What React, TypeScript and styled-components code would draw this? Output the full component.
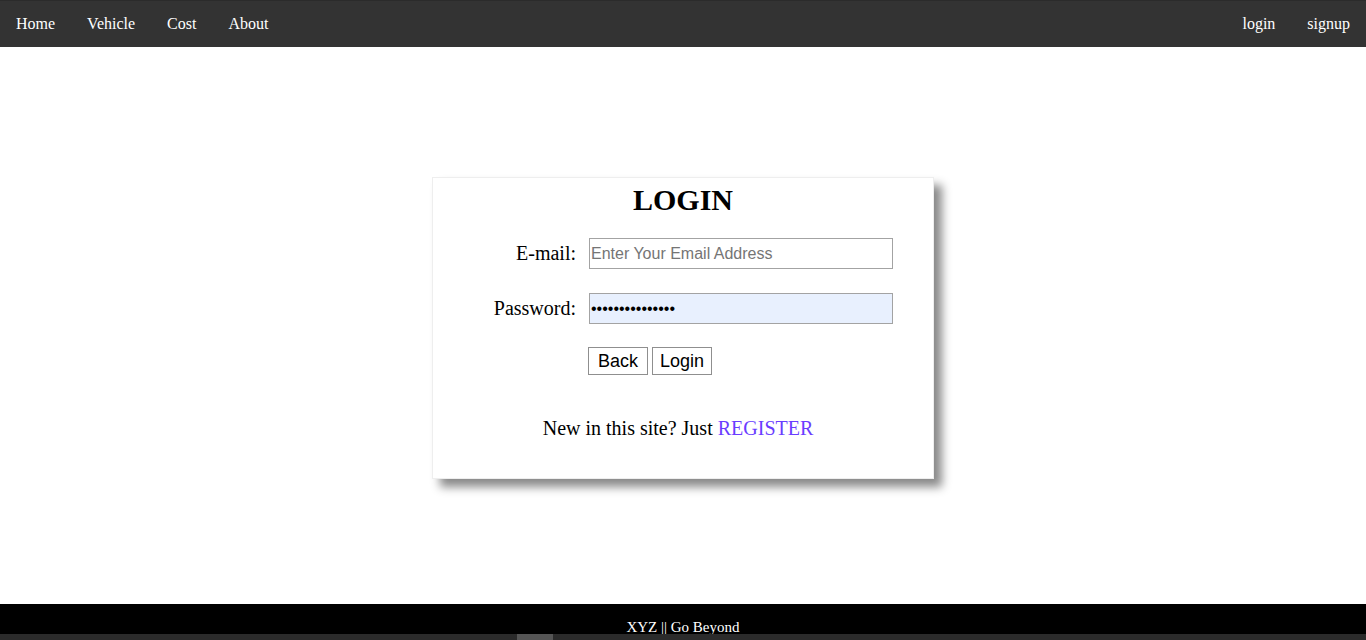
import React from 'react';
import styled, { createGlobalStyle } from 'styled-components';

const GlobalStyle = createGlobalStyle`
  html, body {
    margin: 0;
    padding: 0;
    overflow: hidden;
    background: #fff;
    font-family: "Liberation Serif", "Times New Roman", serif;
  }
`;

const leftLinks = ['Home', 'Vehicle', 'Cost', 'About'];
const rightLinks = ['login', 'signup'];

const App = () => {
  return (
    <>
      <GlobalStyle />
      <Page>
        <NavBar>
          <NavGroup>
            {leftLinks.map((l) => (
              <NavLink key={l} href="#">
                {l}
              </NavLink>
            ))}
          </NavGroup>
          <NavGroup>
            {rightLinks.map((l) => (
              <NavLink key={l} href="#">
                {l}
              </NavLink>
            ))}
          </NavGroup>
        </NavBar>

        <Main>
          <Card>
            <Title>LOGIN</Title>
            <Form onSubmit={(e) => e.preventDefault()}>
              <Label htmlFor="email">E-mail:</Label>
              <Input id="email" type="email" placeholder="Enter Your Email Address" />
              <Label htmlFor="password">Password:</Label>
              <Input id="password" type="password" value="passwordpasswo1" readOnly $filled />
              <span />
              <Buttons>
                <Button type="button">Back</Button>
                <Button type="submit">Login</Button>
              </Buttons>
            </Form>
            <Register>
              New in this site? Just <RegisterLink href="#">REGISTER</RegisterLink>
            </Register>
          </Card>
        </Main>

        <Footer>XYZ || Go Beyond</Footer>
        <ScrollStrip>
          <Thumb />
        </ScrollStrip>
      </Page>
    </>
  );
};

const Page = styled.div`
  display: flex;
  flex-direction: column;
  height: 640px;
`;

const NavBar = styled.nav`
  display: flex;
  justify-content: space-between;
  background: #333;
  border-top: 1px solid #2b2b2b;
`;

const NavGroup = styled.div`
  display: flex;
`;

const NavLink = styled.a`
  display: block;
  padding: 13px 16px 14px;
  line-height: 19px;
  font-size: 16px;
  color: #fff;
  text-decoration: none;
`;

const Main = styled.main`
  flex: 1;
  display: flex;
  justify-content: center;
  align-items: flex-start;
  padding-top: 130px;
`;

const Card = styled.section`
  width: 500px;
  border: 1px solid #eee;
  box-shadow: 8px 8px 9px #8a8a8a;
  background: #fff;
  padding: 5px 0 38px;
  text-align: center;
`;

const Title = styled.h1`
  margin: 0 0 21px;
  font-size: 30px;
  line-height: 34px;
  font-weight: bold;
  color: #000;
`;

const Form = styled.form`
  display: grid;
  grid-template-columns: 103px 304px;
  column-gap: 13px;
  row-gap: 24px;
  justify-content: center;
  align-items: center;
`;

const Label = styled.label`
  text-align: right;
  font-size: 20px;
  color: #000;
`;

const Input = styled.input<{ $filled?: boolean }>`
  box-sizing: border-box;
  width: 304px;
  height: 31px;
  padding: 1px;
  border: 1px solid #a3a3a3;
  background: ${({ $filled }) => ($filled ? '#e8f0fe' : '#fff')};
  font-family: "Liberation Sans", Arial, sans-serif;
  font-size: 16px;
  color: #000;
  outline: none;
  &::placeholder {
    color: #757575;
  }
`;

const Buttons = styled.div`
  display: flex;
  gap: 4px;
  margin: -1px 0 0 -1px;
`;

const Button = styled.button`
  box-sizing: border-box;
  min-width: 60px;
  height: 28px;
  padding: 0 6px;
  border: 1px solid #8f8f8f;
  background: #fff;
  font-family: "Liberation Sans", Arial, sans-serif;
  font-size: 18px;
  color: #000;
  cursor: pointer;
`;

const Register = styled.p`
  margin: 42px 0 0;
  padding-right: 10px;
  font-size: 20px;
  line-height: 23px;
  color: #000;
`;

const RegisterLink = styled.a`
  color: #6a3dff;
  text-decoration: none;
`;

const Footer = styled.footer`
  height: 30px;
  box-sizing: border-box;
  padding-top: 15px;
  background: #000;
  color: #fff;
  text-align: center;
  font-size: 15px;
  line-height: 17px;
`;

const ScrollStrip = styled.div`
  height: 6px;
  background: #2b2b2b;
`;

const Thumb = styled.div`
  width: 36px;
  height: 6px;
  margin-left: 517px;
  background: #555;
`;

export default App;
